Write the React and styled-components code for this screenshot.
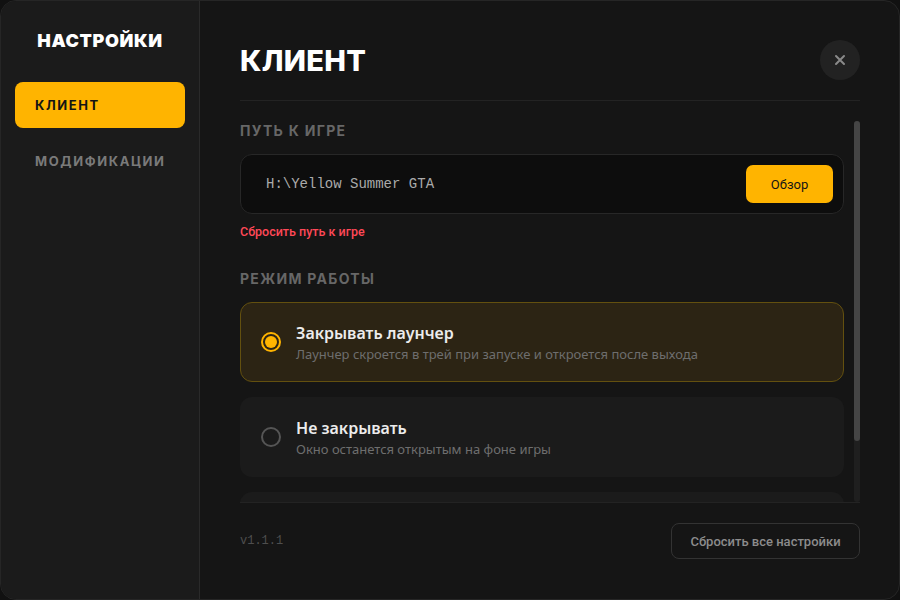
import React, { useState } from "react";
import styled, { createGlobalStyle } from "styled-components";

const Global = createGlobalStyle`
  html, body { margin: 0; padding: 0; background: #111111; }
  * { box-sizing: border-box; }
  body { font-family: Roboto, "Noto Sans", sans-serif; }
`;

const Window = styled.div`
  width: 900px;
  height: 600px;
  display: grid;
  grid-template-columns: 199px 1fr;
  border-radius: 16px;
  border: 1px solid #262626;
  overflow: hidden;
  background: #151515;
`;

const Sidebar = styled.aside`
  background: #1b1b1b;
  border-right: 1px solid #2a2a2a;
  padding: 29px 14px;
  display: flex;
  flex-direction: column;
`;

const Brand = styled.div`
  font-family: Inter, "Noto Sans", sans-serif;
  font-weight: 900;
  font-size: 18px;
  color: #ffffff;
  text-align: center;
  letter-spacing: 0.6px;
  line-height: 22px;
  margin-bottom: 30px;
`;

const NavItem = styled.div`
  height: 46px;
  border-radius: 8px;
  padding: 0 20px;
  display: flex;
  align-items: center;
  font-family: Inter, "Noto Sans", sans-serif;
  font-weight: 700;
  font-size: 13px;
  letter-spacing: 1.6px;
  background: ${(p) => (p.$active ? "#ffb400" : "transparent")};
  color: ${(p) => (p.$active ? "#141414" : "#7a7a7a")};
  margin-bottom: 10px;
`;

const Main = styled.main`
  display: flex;
  flex-direction: column;
  padding: 39px 39px 0 40px;
  min-height: 0;
`;

const Header = styled.header`
  display: flex;
  align-items: center;
  justify-content: space-between;
  padding-bottom: 20px;
  border-bottom: 1px solid #232323;
`;

const Title = styled.h1`
  margin: 0;
  font-family: Inter, "Noto Sans", sans-serif;
  font-weight: 800;
  font-size: 29px;
  color: #ffffff;
  letter-spacing: 0.3px;
`;

const CloseButton = styled.button`
  width: 40px;
  height: 40px;
  border-radius: 50%;
  border: none;
  background: #222222;
  color: #8a8a8a;
  display: flex;
  align-items: center;
  justify-content: center;
  padding: 0;
`;

const ScrollFrame = styled.div`
  position: relative;
  flex: 1;
  min-height: 0;
  margin-top: 20px;
  display: flex;
`;

const Scroll = styled.div`
  flex: 1;
  min-height: 0;
  overflow-y: auto;
  padding-right: 16px;
  scrollbar-width: none;
  &::-webkit-scrollbar { display: none; }
`;

const ScrollTrack = styled.div`
  position: absolute;
  top: 0;
  right: 0;
  bottom: 0;
  width: 6px;
  border-radius: 3px;
  background: #1f1f1f;
`;

const ScrollThumb = styled.div`
  width: 6px;
  border-radius: 3px;
  background: #454545;
`;

const Section = styled.section`
  margin-bottom: ${(p) => p.$gap || 0}px;
`;

const Label = styled.div`
  font-family: Inter, "Noto Sans", sans-serif;
  font-weight: 700;
  font-size: 14px;
  letter-spacing: 1.3px;
  color: #676767;
  line-height: 20px;
  margin-bottom: 13px;
`;

const PathBox = styled.div`
  height: 60px;
  border-radius: 12px;
  background: #0d0d0d;
  border: 1px solid #272727;
  display: flex;
  align-items: center;
  justify-content: space-between;
  padding: 0 10px 0 25px;
`;

const PathText = styled.span`
  font-family: "Liberation Mono", "DejaVu Sans Mono", monospace;
  font-size: 14px;
  color: #aaaaaa;
`;

const BrowseButton = styled.button`
  width: 87px;
  height: 38px;
  border: none;
  border-radius: 7px;
  background: #ffb400;
  color: #151515;
  font-family: Roboto, sans-serif;
  font-size: 13px;
  font-weight: 400;
`;

const ResetLink = styled.div`
  margin-top: 11px;
  font-family: Roboto, sans-serif;
  font-size: 12.5px;
  font-weight: 500;
  color: #ff4857;
  line-height: 14px;
`;

const Options = styled.div`
  display: flex;
  flex-direction: column;
  gap: 15px;
`;

const Option = styled.div`
  height: 80px;
  border-radius: 12px;
  border: 1px solid ${(p) => (p.$selected ? "#63500f" : "transparent")};
  background: ${(p) => (p.$selected ? "#2c2414" : "#1b1b1b")};
  display: flex;
  align-items: center;
  padding: 0 20px;
  gap: 15px;
  flex-shrink: 0;
`;

const Radio = styled.span`
  width: 20px;
  height: 20px;
  border-radius: 50%;
  border: 2px solid ${(p) => (p.$on ? "#ffb400" : "#555555")};
  display: flex;
  align-items: center;
  justify-content: center;
  flex-shrink: 0;
  &::after {
    content: "";
    width: 12px;
    height: 12px;
    border-radius: 50%;
    background: ${(p) => (p.$on ? "#ffb400" : "transparent")};
  }
`;

const OptionText = styled.div`
  display: flex;
  flex-direction: column;
  gap: 3px;
`;

const OptionTitle = styled.div`
  font-family: "Noto Sans", "Open Sans", sans-serif;
  font-weight: 600;
  font-size: 16px;
  color: #ececec;
  line-height: 20px;
`;

const OptionDesc = styled.div`
  font-family: "Noto Sans", "Open Sans", sans-serif;
  font-weight: 400;
  font-size: 13px;
  color: #6e6e6e;
  line-height: 16px;
`;

const Footer = styled.footer`
  border-top: 1px solid #232323;
  padding: 20px 0 40px;
  display: flex;
  align-items: center;
  justify-content: space-between;
`;

const Version = styled.span`
  font-family: "Liberation Mono", "DejaVu Sans Mono", monospace;
  font-size: 12px;
  color: #4e4e4e;
`;

const ResetAll = styled.button`
  width: 189px;
  height: 36px;
  border-radius: 8px;
  border: 1px solid #333333;
  background: transparent;
  color: #8c8c8c;
  font-family: Roboto, sans-serif;
  font-size: 13px;
  font-weight: 500;
`;

const modes = [
  { title: "Закрывать лаунчер", desc: "Лаунчер скроется в трей при запуске и откроется после выхода" },
  { title: "Не закрывать", desc: "Окно останется открытым на фоне игры" },
  { title: "Сворачивать лаунчер", desc: "Лаунчер свернётся в панель задач при запуске игры" },
];

export default function App() {
  const [mode, setMode] = useState(0);
  return (
    <>
      <Global />
      <Window>
        <Sidebar>
          <Brand>НАСТРОЙКИ</Brand>
          <NavItem $active>КЛИЕНТ</NavItem>
          <NavItem>МОДИФИКАЦИИ</NavItem>
        </Sidebar>
        <Main>
          <Header>
            <Title>КЛИЕНТ</Title>
            <CloseButton aria-label="Закрыть">
              <svg width="12" height="12" viewBox="0 0 12 12">
                <path d="M2 2L10 10M10 2L2 10" stroke="currentColor" strokeWidth="2" strokeLinecap="round" />
              </svg>
            </CloseButton>
          </Header>
          <ScrollFrame>
            <Scroll>
              <Section $gap={30}>
                <Label>ПУТЬ К ИГРЕ</Label>
                <PathBox>
                  <PathText>H:\Yellow Summer GTA</PathText>
                  <BrowseButton>Обзор</BrowseButton>
                </PathBox>
                <ResetLink>Сбросить путь к игре</ResetLink>
              </Section>
              <Section>
                <Label>РЕЖИМ РАБОТЫ</Label>
                <Options>
                  {modes.map((m, i) => (
                    <Option key={m.title} $selected={mode === i} onClick={() => setMode(i)}>
                      <Radio $on={mode === i} />
                      <OptionText>
                        <OptionTitle>{m.title}</OptionTitle>
                        <OptionDesc>{m.desc}</OptionDesc>
                      </OptionText>
                    </Option>
                  ))}
                </Options>
              </Section>
            </Scroll>
            <ScrollTrack>
              <ScrollThumb style={{ height: "84%" }} />
            </ScrollTrack>
          </ScrollFrame>
          <Footer>
            <Version>v1.1.1</Version>
            <ResetAll>Сбросить все настройки</ResetAll>
          </Footer>
        </Main>
      </Window>
    </>
  );
}
